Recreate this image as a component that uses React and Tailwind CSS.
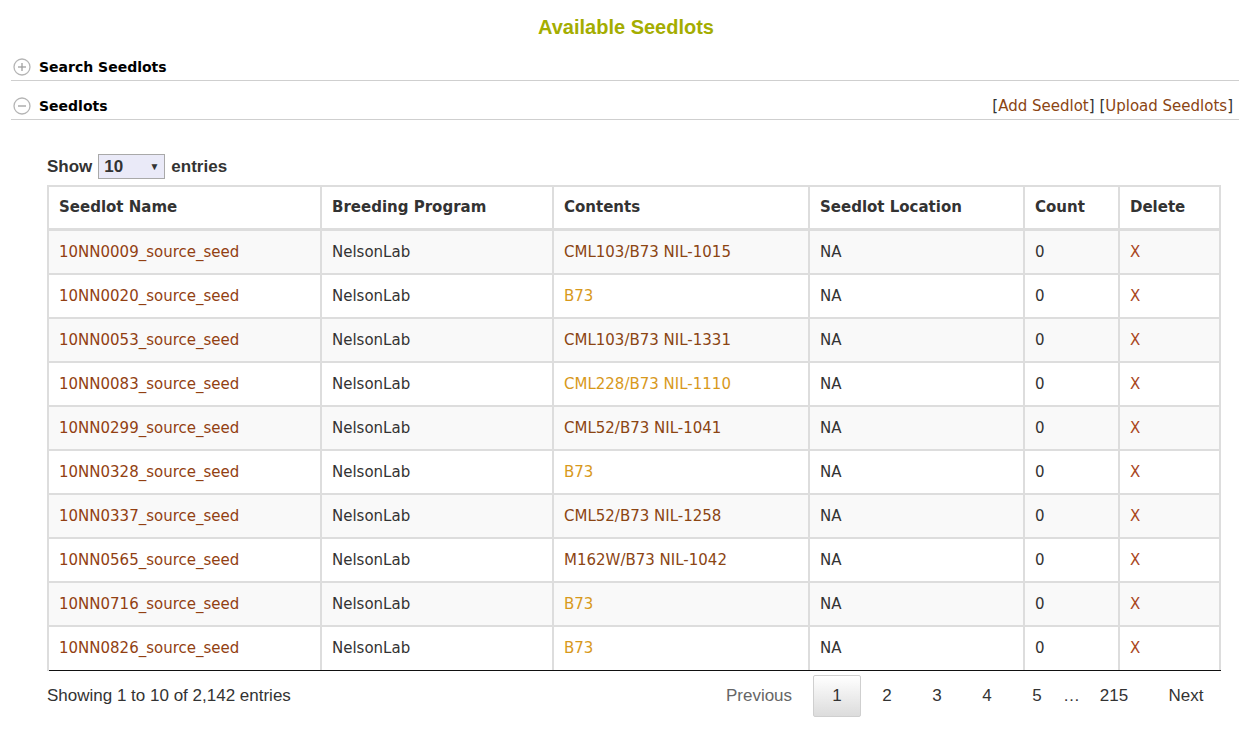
import React from 'react';

const rows = [
  { name: '10NN0009_source_seed', contents: 'CML103/B73 NIL-1015', light: false },
  { name: '10NN0020_source_seed', contents: 'B73', light: true },
  { name: '10NN0053_source_seed', contents: 'CML103/B73 NIL-1331', light: false },
  { name: '10NN0083_source_seed', contents: 'CML228/B73 NIL-1110', light: true },
  { name: '10NN0299_source_seed', contents: 'CML52/B73 NIL-1041', light: false },
  { name: '10NN0328_source_seed', contents: 'B73', light: true },
  { name: '10NN0337_source_seed', contents: 'CML52/B73 NIL-1258', light: false },
  { name: '10NN0565_source_seed', contents: 'M162W/B73 NIL-1042', light: false },
  { name: '10NN0716_source_seed', contents: 'B73', light: true },
  { name: '10NN0826_source_seed', contents: 'B73', light: true },
];

const headers = ['Seedlot Name', 'Breeding Program', 'Contents', 'Seedlot Location', 'Count', 'Delete'];

const gridCols = 'grid grid-cols-[273px_232px_256px_215px_95px_101px]';

const ToggleIcon = ({ open }) => (
  <svg width="18" height="18" viewBox="0 0 18 18" className="shrink-0">
    <circle cx="9" cy="9" r="8" fill="none" stroke="#b5b5b5" strokeWidth="1.3" />
    <line x1="5" y1="9" x2="13" y2="9" stroke="#a0a0a0" strokeWidth="1.3" />
    {!open && <line x1="9" y1="5" x2="9" y2="13" stroke="#a0a0a0" strokeWidth="1.3" />}
  </svg>
);

const SectionRow = ({ title, open, children }) => (
  <div className="flex h-[39px] items-end justify-between border-b border-[#cfcfcf] pb-[3px] pl-[2px] pr-[6px]">
    <div className="flex items-center gap-[8px]">
      <ToggleIcon open={open} />
      <span className="text-[14px] font-bold leading-5 text-black">{title}</span>
    </div>
    {children}
  </div>
);

export default function App() {
  return (
    <div className="min-h-screen bg-white font-['DejaVu_Sans',Verdana,sans-serif] text-[#333]">
      {/* Page title */}
      <div className="h-[42px] pt-[15px] text-center font-['Liberation_Sans',Arial,sans-serif] text-[20px] font-bold leading-6 text-[#a4ad00]">
        Available Seedlots
      </div>

      <div className="ml-[11px] mr-[13px]">
        <SectionRow title="Search Seedlots" open={false} />
        <SectionRow title="Seedlots" open>
          <div className="text-[15px] leading-5">
            <span className="text-[#333]">[</span>
            <span className="text-[#8b4513]">Add Seedlot</span>
            <span className="text-[#333]">]</span>{' '}
            <span className="text-[#333]">[</span>
            <span className="text-[#8b4513]">Upload Seedlots</span>
            <span className="text-[#333]">]</span>
          </div>
        </SectionRow>
      </div>

      <div className="ml-[47px] w-[1174px]">
        {/* Length selector */}
        <div className="mt-[34px] flex h-[25px] items-center gap-[6px] font-['Liberation_Sans',Arial,sans-serif] text-[17px] font-bold text-[#333]">
          <span>Show</span>
          <div className="flex h-[25px] w-[67px] items-center justify-between border border-[#a9a9a9] bg-[#eaeaf8] pl-[5px] pr-[5px]">
            <span>10</span>
            <span className="text-[10px] font-normal">▼</span>
          </div>
          <span>entries</span>
        </div>

        {/* Table */}
        <div className="mt-[6px] border-l-2 border-[#dddddd]">
          <div className={`${gridCols} h-[46px] border-t-2 border-b-[3px] border-[#dddddd]`}>
            {headers.map((h) => (
              <div key={h} className="flex items-center border-r-2 border-[#dddddd] pl-[10px] text-[15px] font-bold text-[#333]">
                {h}
              </div>
            ))}
          </div>
          {rows.map((r, i) => (
            <div
              key={r.name}
              className={`${gridCols} h-[44px] text-[15px] ${i % 2 === 0 ? 'bg-[#f9f9f9]' : 'bg-white'} ${
                i === rows.length - 1 ? 'border-b border-[#111]' : 'border-b-2 border-[#dddddd]'
              }`}
            >
              <div className="flex items-center border-r-2 border-[#dddddd] pl-[10px] text-[#923f12]">{r.name}</div>
              <div className="flex items-center border-r-2 border-[#dddddd] pl-[10px]">NelsonLab</div>
              <div className={`flex items-center border-r-2 border-[#dddddd] pl-[10px] ${r.light ? 'text-[#d8991c]' : 'text-[#8b4513]'}`}>
                {r.contents}
              </div>
              <div className="flex items-center border-r-2 border-[#dddddd] pl-[10px]">NA</div>
              <div className="flex items-center border-r-2 border-[#dddddd] pl-[10px]">0</div>
              <div className="flex items-center border-r-2 border-[#dddddd] pl-[10px] text-[#a9461d]">X</div>
            </div>
          ))}
        </div>

        {/* Footer */}
        <div className="mt-[4px] flex h-[42px] items-center justify-between font-['Liberation_Sans',Arial,sans-serif] text-[17px] text-[#333]">
          <span>Showing 1 to 10 of 2,142 entries</span>
          <div className="flex h-full items-center gap-[2px]">
            <span className="w-[104px] text-center text-[#666]">Previous</span>
            <span className="flex h-[42px] w-[48px] items-center justify-center rounded-[2px] border border-[#cfcfcf] bg-gradient-to-b from-white to-[#dcdcdc]">
              1
            </span>
            {['2', '3', '4', '5'].map((p) => (
              <span key={p} className="w-[48px] text-center">
                {p}
              </span>
            ))}
            <span className="w-[14px] text-center">…</span>
            <span className="w-[70px] text-center">215</span>
            <span className="w-[70px] text-center">Next</span>
          </div>
        </div>
      </div>
    </div>
  );
}
